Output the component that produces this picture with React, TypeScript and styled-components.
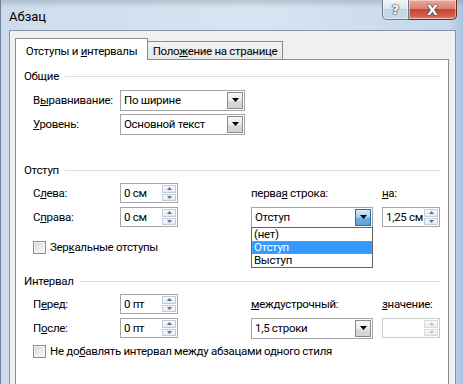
import React from 'react';
import styled, { createGlobalStyle } from 'styled-components';

const Global = createGlobalStyle`
  html, body {
    margin: 0;
    padding: 0;
    overflow: hidden;
    background: #cfdcec;
  }
  body {
    font-family: Roboto, "Noto Sans", sans-serif;
    font-size: 11.5px;
    letter-spacing: -0.3px;
    color: #000;
  }
`;

const Window = styled.div`
  width: 463px;
  height: 384px;
  box-sizing: border-box;
  display: flex;
  flex-direction: column;
  padding: 0 7px 0 9px;
  overflow: hidden;
  background:
    linear-gradient(180deg, rgba(120, 135, 150, 0.35) 0, rgba(200, 215, 230, 0) 8px),
    linear-gradient(90deg, #6f8196 0, #6f8196 1px, #cddcec 1px, #d8e4f1 55%, #c6d8ed 97%, #a9c3e2 100%);
`;

const TitleBar = styled.div`
  height: 30px;
  flex: none;
  display: flex;
  align-items: flex-start;
`;

const Title = styled.div`
  margin-top: 9px;
  line-height: 16px;
  font-size: 13px;
  letter-spacing: 0;
`;

const CaptionButtons = styled.div`
  margin-left: auto;
  margin-right: -1px;
  display: flex;
`;

const CaptionButton = styled.div<{ $close?: boolean }>`
  width: ${p => (p.$close ? 48 : 27)}px;
  height: 20px;
  box-sizing: border-box;
  display: flex;
  align-items: center;
  justify-content: center;
  border: 1px solid ${p => (p.$close ? '#6b2a22' : '#6d7c8e')};
  border-top: none;
  border-left-width: ${p => (p.$close ? 0 : 1)}px;
  border-radius: ${p => (p.$close ? '0 0 5px 0' : '0 0 0 5px')};
  background: ${p =>
    p.$close
      ? 'linear-gradient(180deg, #e9a99b 0, #dc8372 45%, #c8452f 50%, #d2604a 85%, #e0907a 100%)'
      : 'linear-gradient(180deg, #eef3f8 0, #dfe7f0 45%, #c7d4e2 50%, #cbd8e6 100%)'};
  box-shadow: inset 0 0 0 1px rgba(255, 255, 255, 0.45);
  color: #fff;
  font-family: "DejaVu Sans", sans-serif;
  font-weight: bold;
  letter-spacing: 0;
  font-size: ${p => (p.$close ? 14 : 13)}px;
  text-shadow: 0 0 1px #33404f, 0 0 1px #33404f, 0 0 2px #33404f;
`;

const Client = styled.div`
  flex: 1;
  display: flex;
  flex-direction: column;
  background: #f0f0f0;
  border: 1px solid #8593a5;
  border-bottom: none;
  padding: 7px 6px 0 5px;
`;

const Tabs = styled.div`
  height: 22px;
  flex: none;
  display: flex;
  align-items: flex-end;
  margin-bottom: -1px;
  position: relative;
  z-index: 1;
`;

const Tab = styled.div<{ $active?: boolean; $width: number }>`
  width: ${p => p.$width}px;
  box-sizing: border-box;
  height: ${p => (p.$active ? 22 : 18)}px;
  margin-bottom: ${p => (p.$active ? 0 : 1)}px;
  margin-left: ${p => (p.$active ? 0 : -1)}px;
  padding-top: ${p => (p.$active ? 4 : 1)}px;
  text-align: center;
  line-height: 16px;
  border: 1px solid #898c95;
  border-bottom: none;
  background: ${p => (p.$active ? '#fff' : 'linear-gradient(180deg, #f3f3f3, #e6e6e6)')};
  white-space: nowrap;
`;

const Panel = styled.div`
  flex: 1;
  background: #fff;
  border: 1px solid #898c95;
  border-bottom: none;
`;

const Section = styled.section<{ $top: number }>`
  margin-top: ${p => p.$top}px;
`;

const SectionHeader = styled.div`
  display: flex;
  align-items: center;
  height: 16px;
  padding: 0 7px 0 8px;
`;

const HeaderLine = styled.div`
  flex: 1;
  height: 1px;
  margin-left: 6px;
  background: #d5dfe5;
`;

const FieldGrid = styled.div<{ $top: number }>`
  display: grid;
  grid-template-columns: 87px 131px 131px 1fr;
  grid-auto-rows: 24px;
  align-items: center;
  padding-left: 17px;
  margin-top: ${p => p.$top}px;
`;

const Label = styled.span<{ $col?: number }>`
  grid-column: ${p => p.$col ?? 1};
  white-space: nowrap;
`;

const Key = styled.span`
  text-decoration: underline;
  text-underline-offset: 1px;
`;

const SelectBox = styled.div<{ $width: number; $col?: number }>`
  grid-column: ${p => p.$col ?? 2};
  position: relative;
  width: ${p => p.$width}px;
  height: 21px;
  box-sizing: border-box;
  display: flex;
  align-items: stretch;
  background: #fff;
  border: 1px solid #a5a5a5;
`;

const SelectValue = styled.span`
  flex: 1;
  padding-left: 3px;
  line-height: 19px;
  white-space: nowrap;
`;

const DropButton = styled.div<{ $hot?: boolean }>`
  width: 16px;
  margin: 1px;
  box-sizing: border-box;
  display: flex;
  align-items: center;
  justify-content: center;
  border: 1px solid ${p => (p.$hot ? '#2f6d9c' : '#8a8a8a')};
  background: ${p =>
    p.$hot
      ? 'linear-gradient(180deg, #d3ebfb 0, #a9d4f2 45%, #6fb2e2 55%, #5aa2d8 100%)'
      : 'linear-gradient(180deg, #f7f7f7 0, #ececec 50%, #dcdcdc 51%, #d2d2d2 100%)'};
`;

const DropList = styled.div`
  position: absolute;
  left: -1px;
  right: -1px;
  top: 19px;
  background: #fff;
  border: 1px solid #646464;
  z-index: 2;
`;

const DropItem = styled.div<{ $selected?: boolean }>`
  height: 13px;
  line-height: 13px;
  padding-left: 2px;
  background: ${p => (p.$selected ? '#3399ff' : 'transparent')};
  color: ${p => (p.$selected ? '#fff' : '#000')};
  outline: ${p => (p.$selected ? '1px dotted #d98a3c' : 'none')};
  outline-offset: -1px;
`;

const Spinner = styled.div<{ $col?: number; $disabled?: boolean }>`
  grid-column: ${p => p.$col ?? 2};
  width: 58px;
  height: 20px;
  box-sizing: border-box;
  display: flex;
  background: #fff;
  border: 1px solid ${p => (p.$disabled ? '#c9cacc' : '#a5a7ad')};
`;

const SpinValue = styled.span`
  flex: 1;
  padding-left: 3px;
  line-height: 18px;
  white-space: nowrap;
`;

const SpinButtons = styled.div`
  width: 14px;
  margin: 1px 1px 1px 0;
  display: flex;
  flex-direction: column;
  gap: 1px;
`;

const SpinButton = styled.div<{ $disabled?: boolean }>`
  flex: 1;
  display: flex;
  align-items: center;
  justify-content: center;
  border: 1px solid ${p => (p.$disabled ? '#d8dadd' : '#c4ccd6')};
  background: linear-gradient(180deg, #f8f9fa 0, #e8ebef 100%);
  color: ${p => (p.$disabled ? '#b9c3cf' : '#4e6fa3')};
`;

const CheckRow = styled.label<{ $top: number }>`
  display: flex;
  align-items: center;
  gap: 4px;
  height: 16px;
  padding-left: 17px;
  margin-top: ${p => p.$top}px;
  white-space: nowrap;
`;

const CheckBox = styled.span`
  width: 13px;
  height: 13px;
  box-sizing: border-box;
  border: 1px solid #8e8f8f;
  background: linear-gradient(135deg, #d2d5d9 0, #e9eaec 50%, #fbfbfb 100%);
  box-shadow: inset 0 0 0 1px #f4f4f4;
`;

const DropArrow = () => (
  <svg width="7" height="4" viewBox="0 0 7 4">
    <path d="M0 0h7L3.5 4z" fill="#000" />
  </svg>
);

const SpinArrow = ({ down }: { down?: boolean }) => (
  <svg width="5" height="3" viewBox="0 0 5 3">
    <path d={down ? 'M0 0h5L2.5 3z' : 'M0 3h5L2.5 0z'} fill="currentColor" />
  </svg>
);

const Select = ({ value, width, col, hot, children }: { value: string; width: number; col?: number; hot?: boolean; children?: React.ReactNode }) => (
  <SelectBox $width={width} $col={col}>
    <SelectValue>{value}</SelectValue>
    <DropButton $hot={hot}>
      <DropArrow />
    </DropButton>
    {children}
  </SelectBox>
);

const Spin = ({ value, col, disabled }: { value: string; col?: number; disabled?: boolean }) => (
  <Spinner $col={col} $disabled={disabled}>
    <SpinValue>{value}</SpinValue>
    <SpinButtons>
      <SpinButton $disabled={disabled}><SpinArrow /></SpinButton>
      <SpinButton $disabled={disabled}><SpinArrow down /></SpinButton>
    </SpinButtons>
  </Spinner>
);

export default function App() {
  return (
    <>
      <Global />
      <Window>
        <TitleBar>
          <Title>Абзац</Title>
          <CaptionButtons>
            <CaptionButton>?</CaptionButton>
            <CaptionButton $close>X</CaptionButton>
          </CaptionButtons>
        </TitleBar>
        <Client>
          <Tabs>
            <Tab $active $width={133}>Отступы и <Key>и</Key>нтервалы</Tab>
            <Tab $width={136}>Поло<Key>ж</Key>ение на странице</Tab>
          </Tabs>
          <Panel>
            <Section $top={8}>
              <SectionHeader>Общие<HeaderLine /></SectionHeader>
              <FieldGrid $top={4}>
                <Label>В<Key>ы</Key>равнивание:</Label>
                <Select value="По ширине" width={125} />
                <span />
                <span />
                <Label><Key>У</Key>ровень:</Label>
                <Select value="Основной текст" width={125} />
              </FieldGrid>
            </Section>

            <Section $top={26}>
              <SectionHeader>Отступ<HeaderLine /></SectionHeader>
              <FieldGrid $top={3}>
                <Label>С<Key>л</Key>ева:</Label>
                <Spin value="0 см" />
                <Label $col={3}>перва<Key>я</Key> строка:</Label>
                <Label $col={4}><Key>н</Key>а:</Label>
                <Label>С<Key>п</Key>рава:</Label>
                <Spin value="0 см" />
                <Select value="Отступ" width={122} col={3} hot>
                  <DropList>
                    <DropItem>(нет)</DropItem>
                    <DropItem $selected>Отступ</DropItem>
                    <DropItem>Выступ</DropItem>
                  </DropList>
                </Select>
                <Spin value="1,25 см" col={4} />
              </FieldGrid>
              <CheckRow $top={10}>
                <CheckBox />
                <span>Зер<Key>к</Key>альные отступы</span>
              </CheckRow>
            </Section>

            <Section $top={18}>
              <SectionHeader>Интервал<HeaderLine /></SectionHeader>
              <FieldGrid $top={3}>
                <Label>П<Key>е</Key>ред:</Label>
                <Spin value="0 пт" />
                <Label $col={3}><Key>м</Key>еждустрочный:</Label>
                <Label $col={4}><Key>з</Key>начение:</Label>
                <Label>П<Key>о</Key>сле:</Label>
                <Spin value="0 пт" />
                <Select value="1,5 строки" width={122} col={3} />
                <Spin value="" col={4} disabled />
              </FieldGrid>
              <CheckRow $top={3}>
                <CheckBox />
                <span>Не до<Key>б</Key>авлять интервал между абзацами одного стиля</span>
              </CheckRow>
            </Section>
          </Panel>
        </Client>
      </Window>
    </>
  );
}
